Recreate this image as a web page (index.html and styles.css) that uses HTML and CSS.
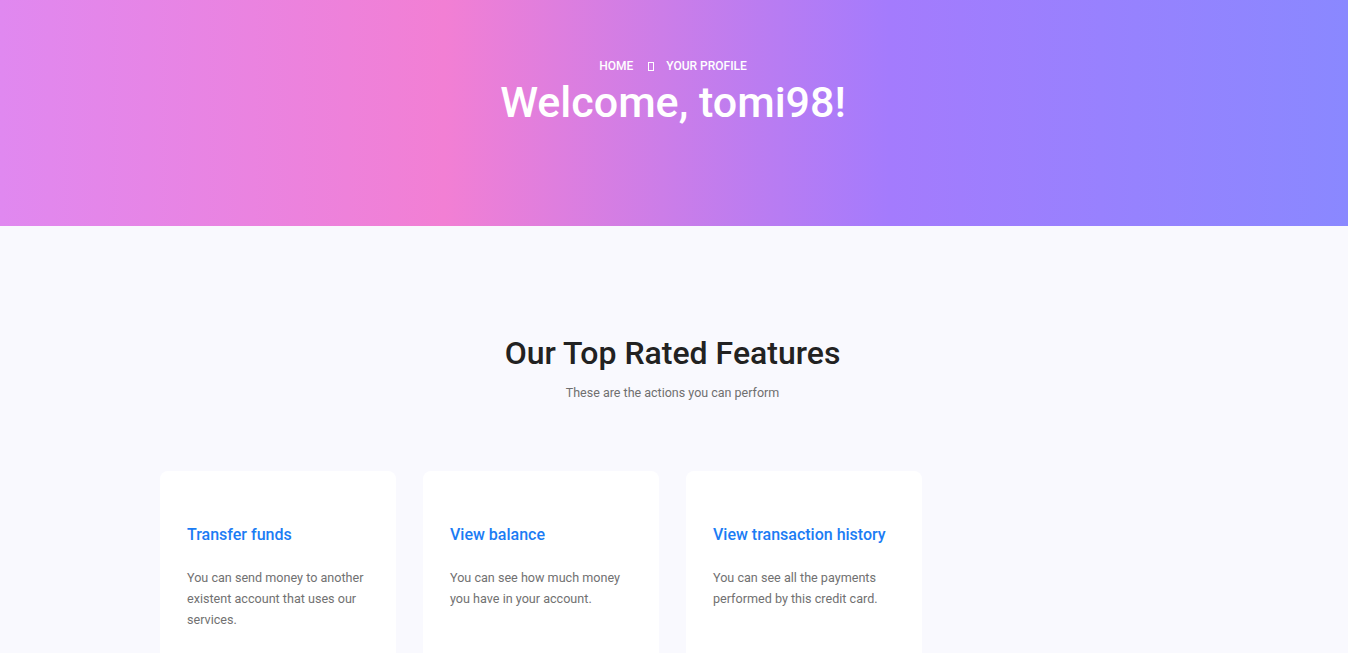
FILE: index.html
```html
<!DOCTYPE html>
<html lang="en">
<head>
<meta charset="utf-8">
<title>Your Profile</title>
<link rel="stylesheet" href="styles.css">
</head>
<body>
<header class="hero">
  <nav class="crumbs">
    <span>HOME</span>
    <span class="sep"></span>
    <span>YOUR PROFILE</span>
  </nav>
  <h1 class="hero-title">Welcome, tomi98!</h1>
</header>
<main class="features">
  <h2 class="section-title">Our Top Rated Features</h2>
  <p class="section-sub">These are the actions you can perform</p>
  <div class="grid">
    <article class="card">
      <h3 class="card-title">Transfer funds</h3>
      <p class="card-text">You can send money to another existent account that uses our services.</p>
    </article>
    <article class="card">
      <h3 class="card-title">View balance</h3>
      <p class="card-text">You can see how much money you have in your account.</p>
    </article>
    <article class="card">
      <h3 class="card-title">View transaction history</h3>
      <p class="card-text">You can see all the payments performed by this credit card.</p>
    </article>
  </div>
</main>
</body>
</html>
```
FILE: styles.css
```css
* { box-sizing: border-box; }
html, body { margin: 0; padding: 0; }
body {
  font-family: Roboto, "Liberation Sans", sans-serif;
  background: #f9f9fe;
  overflow: hidden;
  height: 653px;
}
.hero {
  height: 226px;
  background: linear-gradient(90deg, #e088f0 0%, #f27fd4 33%, #a47bfd 66%, #8a88ff 100%);
  display: flex;
  flex-direction: column;
  align-items: center;
  padding-top: 59px;
  padding-right: 2px;
  color: #fff;
}
.crumbs {
  display: flex;
  align-items: center;
  font-size: 12px;
  font-weight: 500;
  line-height: 14px;
}
.sep {
  display: inline-block;
  width: 6px;
  height: 9px;
  border: 1px solid #fff;
  margin: 0 12px 0 15px;
}
.hero-title {
  margin: 3px 0 0;
  font-size: 43px;
  font-weight: 500;
  line-height: 52px;
}
.features {
  display: flex;
  flex-direction: column;
  align-items: center;
  padding-top: 107px;
  padding-right: 3px;
}
.section-title {
  margin: 0;
  font-size: 32px;
  font-weight: 500;
  line-height: 40px;
  color: #222;
}
.section-sub {
  margin: 12px 0 0;
  font-size: 12.5px;
  line-height: 16px;
  color: #6f6f6f;
}
.grid {
  margin-top: 70px;
  display: grid;
  grid-template-columns: repeat(4, 236px);
  gap: 27px;
}
.card {
  background: #fff;
  border-radius: 8px;
  padding: 54px 27px 30px;
  height: 220px;
}
.card-title {
  margin: 0;
  font-size: 16px;
  font-weight: 500;
  line-height: 20px;
  color: #1b7cf4;
}
.card-text {
  margin: 22px 0 0;
  font-size: 12.6px;
  line-height: 21px;
  color: #717171;
}
```
